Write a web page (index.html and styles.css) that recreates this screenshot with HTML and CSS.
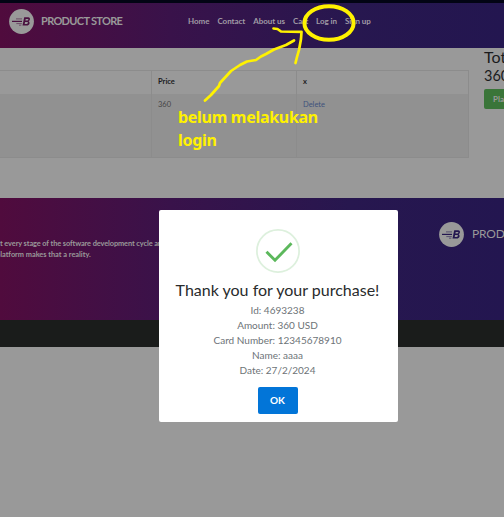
FILE: index.html
```html
<!DOCTYPE html>
<html lang="en">
<head>
<meta charset="utf-8">
<title>PRODUCT STORE</title>
<link rel="stylesheet" href="styles.css">
</head>
<body>
<svg class="defs" width="0" height="0" aria-hidden="true">
  <symbol id="logo" viewBox="0 0 25 25">
    <circle cx="12.5" cy="12.5" r="12.4" fill="#999"/>
    <path d="M3 12.4H13" fill="none" stroke="currentColor" stroke-width="1.2"/>
    <path d="M7 9.9H13M7.3 14.6H12.8M10 16.2H12.3" fill="none" stroke="currentColor" stroke-width=".8" opacity=".7"/>
    <path fill-rule="evenodd" fill="currentColor" d="M15.2 8.3H19.3C21.4 8.3 21.6 11.5 19.6 12.2C21.6 13.5 20.4 16.5 17.8 16.5H13.5ZM16.7 9.9L16.4 11.5H18.3C19.6 11.5 19.9 9.9 18.6 9.9ZM16.1 13L15.7 14.9H17.7C19.2 14.9 19.5 13 18.1 13Z"/>
  </symbol>
</svg>
<header class="navbar">
  <svg class="logo"><use href="#logo"/></svg>
  <span class="brand">PRODUCT STORE</span>
  <nav class="links"><a>Home</a><a>Contact</a><a>About us</a><a>Cart</a><a>Log in</a><a>Sign up</a></nav>
</header>
<main class="content">
  <div class="table">
    <div class="row head"><span></span><span>Price</span><span>x</span></div>
    <div class="row item"><span></span><span>360</span><span><a>Delete</a></span></div>
  </div>
  <aside class="total"><h2>Total</h2><h3>360</h3><button class="place">Place Order</button></aside>
</main>
<footer>
  <div class="about">
    <p class="blurb">t every stage of the software development cycle and<br><span class="second">platform makes that a reality.</span></p>
    <div class="foot-brand"><svg class="logo"><use href="#logo"/></svg><span>PRODUCT STORE</span></div>
  </div>
  <div class="strip"></div>
</footer>
<section class="modal">
  <svg class="check" viewBox="0 0 44 44"><circle cx="22" cy="22" r="21.1" fill="none" stroke="#ddf0dd" stroke-width="1.7"/><path d="M10.5 22.8L19 31.3L35.5 14.3" fill="none" stroke="#5cb85c" stroke-width="2.9"/></svg>
  <h1>Thank you for your purchase!</h1>
  <p class="details"><span>Id: 4693238</span><span>Amount: 360 USD</span><span>Card Number: 12345678910</span><span>Name: aaaa</span><span>Date: 27/2/2024</span></p>
  <button class="ok">OK</button>
</section>
<p class="note">belum melakukan<br>login</p>
<svg class="marks" viewBox="0 0 504 517">
  <ellipse cx="329" cy="23" rx="24.6" ry="16.8" stroke-width="4"/>
  <path stroke-width="2.7" d="M205 100.5L211 95L219 86L220 83L231 71L240 65L247 61.5L256 60L261 56.5L266 54L274 49.5L286 45L294 40.5"/>
  <path stroke-width="2.7" d="M273.5 28.5L277.5 29L281 31.5L301.5 31.8L301 39L299 50L297 57L295.5 63"/>
</svg>
</body>
</html>
```
FILE: styles.css
```css
* { box-sizing: border-box; }
html, body { margin: 0; height: 517px; overflow: hidden; }
body { background: #999; font-family: Lato, sans-serif; color: #1a1b1d; position: relative; }
h1, h2, h3, p { margin: 0; font-weight: 400; }
button { border: 0; font-family: inherit; padding: 0; }
.defs { position: absolute; }
.navbar { height: 48px; border-top: 3px solid #020414; padding: 6px 0 0 9px; display: flex; align-items: flex-start; background: linear-gradient(90deg, #500b3d 0, #39124a 170px, #27174f 350px, #231650 504px); }
.logo { width: 25px; height: 25px; flex: none; color: #49103f; }
.brand { margin: 5px 0 0 7px; width: 147px; font-size: 11px; line-height: 14px; font-weight: 700; letter-spacing: -.68px; color: #999; white-space: nowrap; }
.links { display: flex; gap: 8px; margin-top: 7px; font-size: 8px; line-height: 11px; font-weight: 700; letter-spacing: -.05px; color: #a09aa5; white-space: nowrap; }
.content { height: 150px; display: flex; overflow: hidden; }
.table { margin-top: 22px; width: 469px; height: 88px; flex: none; border: 1px solid #8c8c8c; border-left: 0; }
.row { display: grid; grid-template-columns: 152px 145px 1fr; font-size: 7.5px; line-height: 10px; }
.row span { padding: 6px 6px; border-right: 1px solid #8c8c8c; }
.row span:last-child { border-right: 0; }
.head { height: 23px; font-weight: 700; }
.item { height: 63px; background: #919191; color: #454545; }
.item a { color: #3e517c; }
.total { margin-left: 15px; width: 80px; flex: none; }
.total h2 { font-size: 16px; line-height: 18px; }
.total h3 { font-size: 14.5px; line-height: 18px; margin-top: 1px; }
.place { display: block; margin-top: 4px; width: 58px; height: 20px; border-radius: 2px; background: #3a7539; color: #999; font-size: 8px; font-weight: 700; text-align: left; padding-left: 9px; }
.about { height: 122px; display: flex; overflow: hidden; background: linear-gradient(90deg, #500b3d 0, #39124a 170px, #27174f 350px, #231650 504px); }
.blurb { width: 439px; flex: none; padding-top: 40px; font-size: 7.4px; line-height: 11px; font-weight: 700; letter-spacing: -.1px; color: #999; white-space: nowrap; }
.second { margin-left: -4px; letter-spacing: -.03px; }
.foot-brand { display: flex; padding-top: 24px; font-size: 12px; line-height: 15px; color: #999; white-space: nowrap; }
.foot-brand .logo { color: #231650; }
.foot-brand span { margin: 4px 0 0 8px; letter-spacing: -.2px; }
.strip { height: 27px; background: #1a1c1b; }
.modal { position: absolute; left: 159px; top: 210px; width: 239px; height: 212px; background: #fff; border-radius: 2px; padding: 19px 2px 0 0; display: flex; flex-direction: column; align-items: center; }
.check { width: 44px; height: 44px; flex: none; }
.modal h1 { margin-top: 7px; font-size: 16px; line-height: 20px; color: #292b2c; white-space: nowrap; }
.details { margin-top: 3px; display: flex; flex-direction: column; align-items: center; font-size: 10px; line-height: 15px; color: #6d7377; white-space: nowrap; }
.ok { margin-top: 9px; width: 40px; height: 27px; flex: none; border-radius: 2px; background: #0275d8; color: #fff; font-size: 10px; font-weight: 700; padding-bottom: 2px; }
.note { position: absolute; left: 178px; top: 106px; font: 700 16px/23px "Noto Sans", sans-serif; letter-spacing: -.29px; color: #fff200; white-space: nowrap; }
.marks { position: absolute; left: 0; top: 0; width: 504px; height: 517px; fill: none; stroke: #fff200; stroke-linecap: round; stroke-linejoin: round; }
```
